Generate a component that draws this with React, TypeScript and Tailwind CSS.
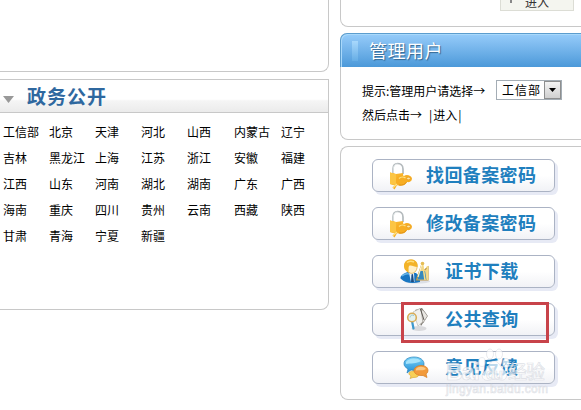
import React from 'react';

const provinces = [
  ['工信部', '北京', '天津', '河北', '山西', '内蒙古', '辽宁'],
  ['吉林', '黑龙江', '上海', '江苏', '浙江', '安徽', '福建'],
  ['江西', '山东', '河南', '湖北', '湖南', '广东', '广西'],
  ['海南', '重庆', '四川', '贵州', '云南', '西藏', '陕西'],
  ['甘肃', '青海', '宁夏', '新疆'],
];

const LockIcon: React.FC = () => (
  <svg width="26" height="30" viewBox="0 0 26 30" className="shrink-0">
    <path d="M5 13V8C5 4 7 2.500 9.500 2.500S15 4 15 8V13" fill="none" stroke="#b4babd" strokeWidth="1.700" />
    <path d="M5.300 12V8C5.300 4.500 7.500 3 9.500 3" fill="none" stroke="#e8eded" strokeWidth="0.800" />
    <path d="M2 11.500 8 13 15 12C15.500 15 15 20 14 23 9 25 5.500 24.500 2 23Z" fill="#f9b52c" />
    <path d="M2 11.500 8 13 8 24 2 23Z" fill="#fcc543" />
    <path d="M8 19C8 15.500 12 13.500 16 15 18 13 23.500 14 24 17.500 24 21 20.500 21.500 19 21 17 25 12 25.500 9 24L8 26 6.500 28.500 4.500 26.500 8 23Z" fill="#f7ae24" />
    <path d="M11 17.500C13 15.500 16 16 17.500 17M5 26.500 9 23" fill="none" stroke="#fde183" strokeWidth="1.300" />
    <ellipse cx="20.500" cy="17.500" rx="1.800" ry="1.300" fill="#fde9a8" stroke="#dd8f19" strokeWidth="0.600" />
    <path d="M11 24C14 24.500 17.500 23.500 18.500 21" fill="none" stroke="#dd8f14" strokeWidth="0.900" />
  </svg>
);

const CertIcon: React.FC = () => (
  <svg width="32" height="28" viewBox="0 0 32 28" className="shrink-0">
    <ellipse cx="18" cy="23.500" rx="13" ry="2" fill="#dcdfe6" />
    <path d="M1.500 19C3 16 7 14.500 9 14L17 15C20 17 21 20 21 24 13 26 6 25 1.500 20.500Z" fill="#1976c2" />
    <path d="M3 18C6 15.500 8 15.500 10 16" fill="none" stroke="#66b5e8" strokeWidth="1.600" />
    <path d="M10 15 15 15 15.500 24 12 24Z" fill="#eaf4fc" />
    <path d="M12.500 16.500 14 16 15 24H12Z" fill="#1b4c83" />
    <path d="M6 9C5 4 9 1.500 13 2 17 2.500 19 6 18 10 17 15 13 16 11 15 8 14.500 7 12 6 9Z" fill="#fff0c8" stroke="#d89b24" strokeWidth="0.600" />
    <path d="M5.500 11C3.500 4 8 1 12.500 1.500 17 1.700 19 5 18.500 9 15 9 12 6.500 10 8 9 10 10 12 9.500 14.500 7.500 13.500 6.500 12.500 5.500 11Z" fill="#f3b328" />
    <path d="M8 4.500C10 3 13 3 15 4" fill="none" stroke="#ffdf7b" strokeWidth="1.500" />
    <path d="M23 6 17.500 22H29V9L25.500 12" fill="#f0d58a" stroke="#bb9341" strokeWidth="1.200" />
    <path d="M20.500 13H26L27.500 21.500H18.500Z" fill="#3589bd" />
    <path d="M23.500 5 26 22M28.500 8V22" fill="none" stroke="#f7dc85" strokeWidth="1.600" />
    <path d="M23 6 19 19" fill="none" stroke="#fff3c8" strokeWidth="1.200" />
    <circle cx="23.500" cy="5.500" r="1.800" fill="#e6bd55" />
  </svg>
);

const SearchIcon: React.FC = () => (
  <svg width="24" height="26" viewBox="0 0 24 26" className="shrink-0">
    <ellipse cx="13" cy="21.500" rx="7.500" ry="2.500" fill="#d9d9dc" />
    <path d="M9 3 16 1 21.500 9 15 19Z" fill="#77716a" />
    <path d="M7 5 14 1.500 19 13 12 19Z" fill="#f1f0ed" stroke="#bdbbb6" strokeWidth="0.700" />
    <path d="M15 2 18 4 21.500 9 17 16Z" fill="#e9e7e3" stroke="#8b8780" strokeWidth="0.600" />
    <path d="M14.500 2 18 13" stroke="#514d48" strokeWidth="0.900" />
    <path d="M6 14 7.500 21.500" stroke="#3e99ce" strokeWidth="2.200" strokeLinecap="round" />
    <circle cx="6" cy="10.500" r="4.300" fill="#e3f1f0" stroke="#d9ad58" strokeWidth="1.600" />
    <path d="M4 10.500C4 8.500 6 7.500 8 8.500" fill="none" stroke="#9bc6cd" strokeWidth="1" />
  </svg>
);

const ChatIcon: React.FC = () => (
  <svg width="27" height="24" viewBox="0 0 27 24" className="shrink-0">
    <defs>
      <linearGradient id="bubble" x2="0" y2="1">
        <stop stopColor="#78d2f8" />
        <stop offset="1" stopColor="#238ed5" />
      </linearGradient>
    </defs>
    <path d="M11 1C17 1 21 4 21 8 21 12 17 14.500 11 14.500L8 14 4 17 5 13C2 11 1 10 1 7.500 1 4 5 1 11 1Z" fill="url(#bubble)" stroke="#2682bd" strokeWidth="0.700" />
    <path d="M3 6C5 2 15 1 18 5 13 8 8 7 3 8Z" fill="#a6e3fb" />
    <path d="M7 16C10 14 16 15 16 18 16 21 13 21.500 10 21.500L7 22.500 8 20C6 19 5 17 7 16Z" fill="#f8cf56" stroke="#d4a12d" strokeWidth="0.600" />
    <path d="M18 9.500C23 9.500 25 12 25 14.500 25 17 23 18 23 18L24 21.500 20 19.500C14 20 11 17 11 14.500 11 12 14 9.500 18 9.500Z" fill="#f29a3b" stroke="#d57b20" strokeWidth="0.700" />
    <path d="M13 13C15 10 21 10 23 13 20 15 17 14 13 14.500Z" fill="#fac986" />
  </svg>
);

const links = [
  { label: '找回备案密码', icon: <LockIcon />, pad: 'pl-[15px]', gap: 'gap-[12px]' },
  { label: '修改备案密码', icon: <LockIcon />, pad: 'pl-[15px]', gap: 'gap-[12px]' },
  { label: '证书下载', icon: <CertIcon />, pad: 'pl-[26px]', gap: 'gap-[14px]' },
  { label: '公共查询', icon: <SearchIcon />, pad: 'pl-[33px]', gap: 'gap-[15px]' },
  { label: '意见反馈', icon: <ChatIcon />, pad: 'pl-[30px]', gap: 'gap-[15px]' },
];

const Watermark: React.FC = () => (
  <svg width="112" height="52" viewBox="0 0 112 52" className="absolute left-[102px] top-[200px]">
    <g fill="#fff" fillOpacity="0.7" stroke="#c9cdd6" strokeOpacity="0.6" strokeWidth="0.700" fontFamily="'Liberation Sans', 'Noto Sans CJK SC', sans-serif">
      <ellipse cx="39" cy="15" rx="3.300" ry="4.500" />
      <ellipse cx="47" cy="7" rx="3.500" ry="5" />
      <ellipse cx="56" cy="7" rx="3.500" ry="5" />
      <ellipse cx="63" cy="16" rx="3.300" ry="4.500" />
      <path d="M51 14C56 14 57 20 61 23 66 28 63 34 58 33 53 32 51 32 47 33 40 35 37 29 41 25 45 22 46 14 51 14Z" />
      <text x="3" y="33" fontSize="23" fontWeight="700" textLength="34">Bai</text>
      <text x="43" y="32" fontSize="15" fontWeight="700" textLength="17">du</text>
      <text x="65" y="32" fontSize="19" textLength="37">经验</text>
      <text x="3" y="46" fontSize="12" textLength="102">jingyan.baidu.com</text>
    </g>
  </svg>
);

const ProvincePanel: React.FC = () => (
  <section className="h-[231px] rounded-br-[8px] border-y border-r border-[#c8c8c8]">
    <h2 className="flex h-[33px] items-center border-b border-[#c8c8c8] bg-linear-to-b from-white from-60% via-[#f5f5f5] via-65% to-[#ebebeb]">
      <svg width="12" height="8" viewBox="0 0 12 8" className="ml-[3px] mt-[7px]">
        <path d="M0 0H11L5.500 7Z" fill="#999" />
      </svg>
      <span className="-mt-px ml-[12px] text-[19px] font-bold leading-none tracking-[1px] text-[#2f689f]">政务公开</span>
    </h2>
    <div className="pl-[3px] pt-[6px] text-[12px] leading-[26px]">
      {provinces.map((row) => (
        <div key={row[0]} className="grid grid-cols-[46px_46px_46px_46px_47px_47px_40px] whitespace-nowrap">
          {row.map((name) => (
            <a key={name}>{name}</a>
          ))}
        </div>
      ))}
    </div>
  </section>
);

const AdminPanel: React.FC = () => (
  <section className="h-[107px] rounded-l-[8px] border-b border-l border-[#c8c8c8]">
    <h2 className="-ml-px flex h-[34px] items-center rounded-tl-[7px] border-l border-t border-[#5c9dce] bg-linear-to-b from-[#96ccfa] to-[#4b99d9] shadow-[inset_1px_1px_0_#a9d9fb]">
      <span className="ml-[11px] h-[20px] w-[6px] bg-linear-to-b from-[#a8d8fc] to-[#65ade5]" />
      <span className="-mt-[2px] ml-[11px] text-[18px] leading-none tracking-[0.500px] text-white [text-shadow:1px_1px_1px_#32658f]">管理用户</span>
    </h2>
    <div className="pl-[21px] pt-[11px] text-[12px]">
      <div className="flex h-[24px] items-center whitespace-nowrap">
        <span className="w-[134px] pt-px">提示:管理用户请选择→</span>
        <button className="flex h-[20px] w-[66px] items-center justify-between border border-[#a4adb5] bg-white pl-[5px] text-[12px] tracking-[1px]">
          工信部
          <span className="flex h-[18px] w-[17px] items-center justify-center border border-[#8e8f8f] bg-linear-to-b from-[#f4f4f4] to-[#d0d0d0]">
            <svg width="7" height="4" viewBox="0 0 7 4">
              <path d="M0 0H7L3.500 4Z" fill="#000" />
            </svg>
          </span>
        </button>
      </div>
      <div className="flex h-[24px] items-center whitespace-pre pt-[2px]">
        <span className="w-[67px]">然后点击→</span>
        <a className="flex gap-px"><span>|</span>进入<span>|</span></a>
      </div>
    </div>
  </section>
);

export default function App() {
  return (
    <div className="flex h-[410px] w-[581px] gap-[11px] overflow-hidden bg-white font-['Noto_Sans_CJK_SC',sans-serif] text-black">
      {/* Left column */}
      <div className="flex w-[329px] shrink-0 flex-col gap-[7px]">
        <section className="h-[72px] rounded-br-[8px] border-b border-r border-[#c8c8c8]" />
        <ProvincePanel />
      </div>

      {/* Right column */}
      <div className="flex w-[241px] shrink-0 flex-col">
        <section className="flex h-[27px] items-start overflow-hidden rounded-bl-[8px] border-b border-l border-[#c8c8c8] pl-[159px]">
          <button className="flex h-[11px] w-[74px] items-end border-x border-b border-[#dcddd5] bg-[#f4f5ef] pl-[9px] text-[12px] leading-[17px] text-[#333]">
            <span className="mb-[7px] h-[3px] w-[2px] bg-[#888]" />
            <span className="ml-[13px]">进入</span>
          </button>
        </section>
        <div className="mt-[6px]">
          <AdminPanel />
        </div>
        <section className="relative mt-[6px] flex h-[254px] flex-col gap-[15px] rounded-l-[8px] border-y border-l border-[#c8c8c8] pl-[31px] pt-[12px]">
          {links.map(({ label, icon, pad, gap }) => (
            <a
              key={label}
              className={`flex h-[33px] w-[183px] shrink-0 items-center whitespace-nowrap rounded-[6px] border border-[#abb3c4] bg-linear-to-b from-white from-50% to-[#f1f2f6] shadow-[3px_3px_0_#e7eaf5] ${pad} ${gap}`}
            >
              {icon}
              <span className="-mt-[3px] text-[18px] font-bold leading-none tracking-[0.400px] text-[#1f7fbe]">{label}</span>
            </a>
          ))}
          {/* Highlight around the public query entry */}
          <div className="absolute left-[60px] top-[155px] h-[41px] w-[148px] border-[3px] border-[#c8434a]" />
          <Watermark />
        </section>
      </div>
    </div>
  );
}
